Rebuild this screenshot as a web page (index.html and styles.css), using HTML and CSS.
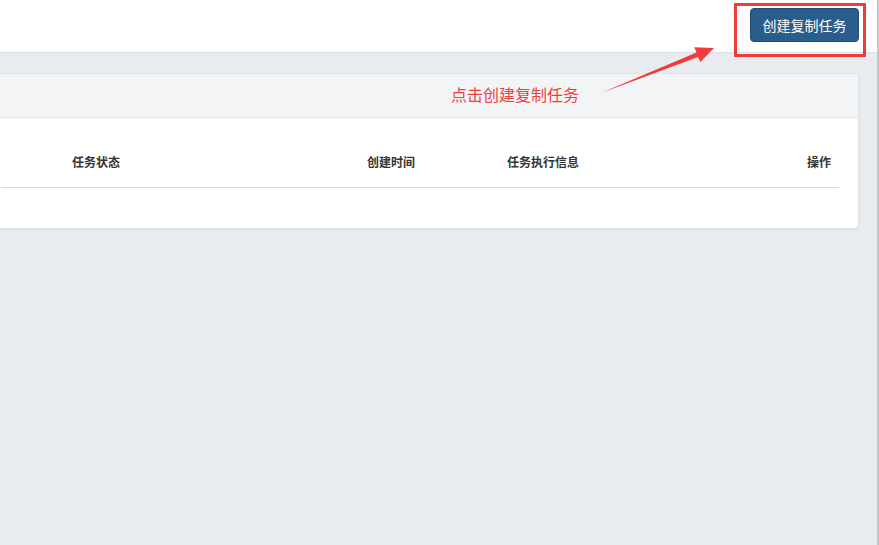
FILE: index.html
```html
<!DOCTYPE html>
<html lang="zh-CN">
<head>
  <meta charset="UTF-8">
  <title>复制任务</title>
  <link rel="stylesheet" href="styles.css">
</head>
<body>
  <div class="pagina">
    <!-- Barra superior con el botón principal -->
    <div class="cabecera">
      <button class="btn-crear">创建复制任务</button>
    </div>

    <!-- Tarjeta con la tabla de tareas -->
    <div class="contenido">
      <div class="tarjeta">
        <div class="tarjeta-cabeza"></div>
        <div class="tarjeta-cuerpo">
          <table class="tabla">
            <colgroup>
              <col class="col-inicio">
              <col class="col-estado">
              <col class="col-fecha">
              <col>
              <col class="col-accion">
            </colgroup>
            <thead>
              <tr>
                <th></th>
                <th>任务状态</th>
                <th>创建时间</th>
                <th>任务执行信息</th>
                <th class="derecha">操作</th>
              </tr>
            </thead>
          </table>
        </div>
      </div>
    </div>

    <!-- Anotación roja sobre la captura -->
    <div class="nota-texto">点击创建复制任务</div>
    <svg class="nota-dibujo" width="877" height="545" viewBox="0 0 877 545">
      <rect x="735.5" y="4.5" width="129" height="51" fill="none" stroke="#f23a3a" stroke-width="3"/>
      <polygon points="601,93 698,57 700.3,62.1 714,48 694.3,47.3 696.5,52.5" fill="#f23a3a"/>
    </svg>
  </div>
  <div class="barra-lateral"></div>
</body>
</html>
```

FILE: styles.css
```css
/* Reset básico */
* {
  margin: 0;
  padding: 0;
  box-sizing: border-box;
}
body {
  font-family: "Noto Sans CJK SC", "Noto Sans", sans-serif;
  background-color: #e9ecef;
  color: #333;
  width: 879px;
  height: 545px;
  overflow: hidden;
  display: flex;
}
.pagina {
  flex: 1;
  position: relative;
  height: 100%;
}
/* Franja gris de la derecha */
.barra-lateral {
  width: 2px;
  height: 100%;
  background: #c4c4c4;
}
.cabecera {
  height: 53px;
  background: #fff;
  border-bottom: 1px solid #dcdfe3;
  display: flex;
  justify-content: flex-end;
  align-items: flex-start;
  padding: 8px 18px 0 0;
}
.btn-crear {
  width: 109px;
  height: 34px;
  background-color: #2a5d8b;
  border: 1px solid #1f4b72;
  border-radius: 4px;
  color: #fff;
  font-family: inherit;
  font-size: 14px;
  cursor: pointer;
}
.contenido {
  padding: 20px 18px 0 0;
}
.tarjeta {
  margin-left: -10px;
  background: #fff;
  border: 1px solid #dfe2e6;
  border-radius: 4px;
  box-shadow: 0 1px 2px rgba(0, 0, 0, 0.08);
}
.tarjeta-cabeza {
  height: 44px;
  background: #f3f4f6;
  border-bottom: 1px solid #e3e6ea;
  border-radius: 4px 4px 0 0;
}
.tarjeta-cuerpo {
  padding: 19px 19px 40px 10px;
}
.tabla {
  width: 100%;
  border-collapse: collapse;
  table-layout: fixed;
}
.col-inicio { width: 63px; }
.col-estado { width: 295px; }
.col-fecha { width: 140px; }
.col-accion { width: 120px; }
.tabla th {
  font-size: 12px;
  font-weight: bold;
  line-height: 16px;
  text-align: left;
  padding: 17px 8px;
  border-bottom: 1px solid #dcdcdc;
  color: #333;
}
.tabla th.derecha {
  text-align: right;
}
/* Anotación */
.nota-texto {
  position: absolute;
  left: 451px;
  top: 82px;
  font-size: 16px;
  line-height: 24px;
  color: #f23d3d;
}
.nota-dibujo {
  position: absolute;
  left: 0;
  top: 0;
  pointer-events: none;
}
```
